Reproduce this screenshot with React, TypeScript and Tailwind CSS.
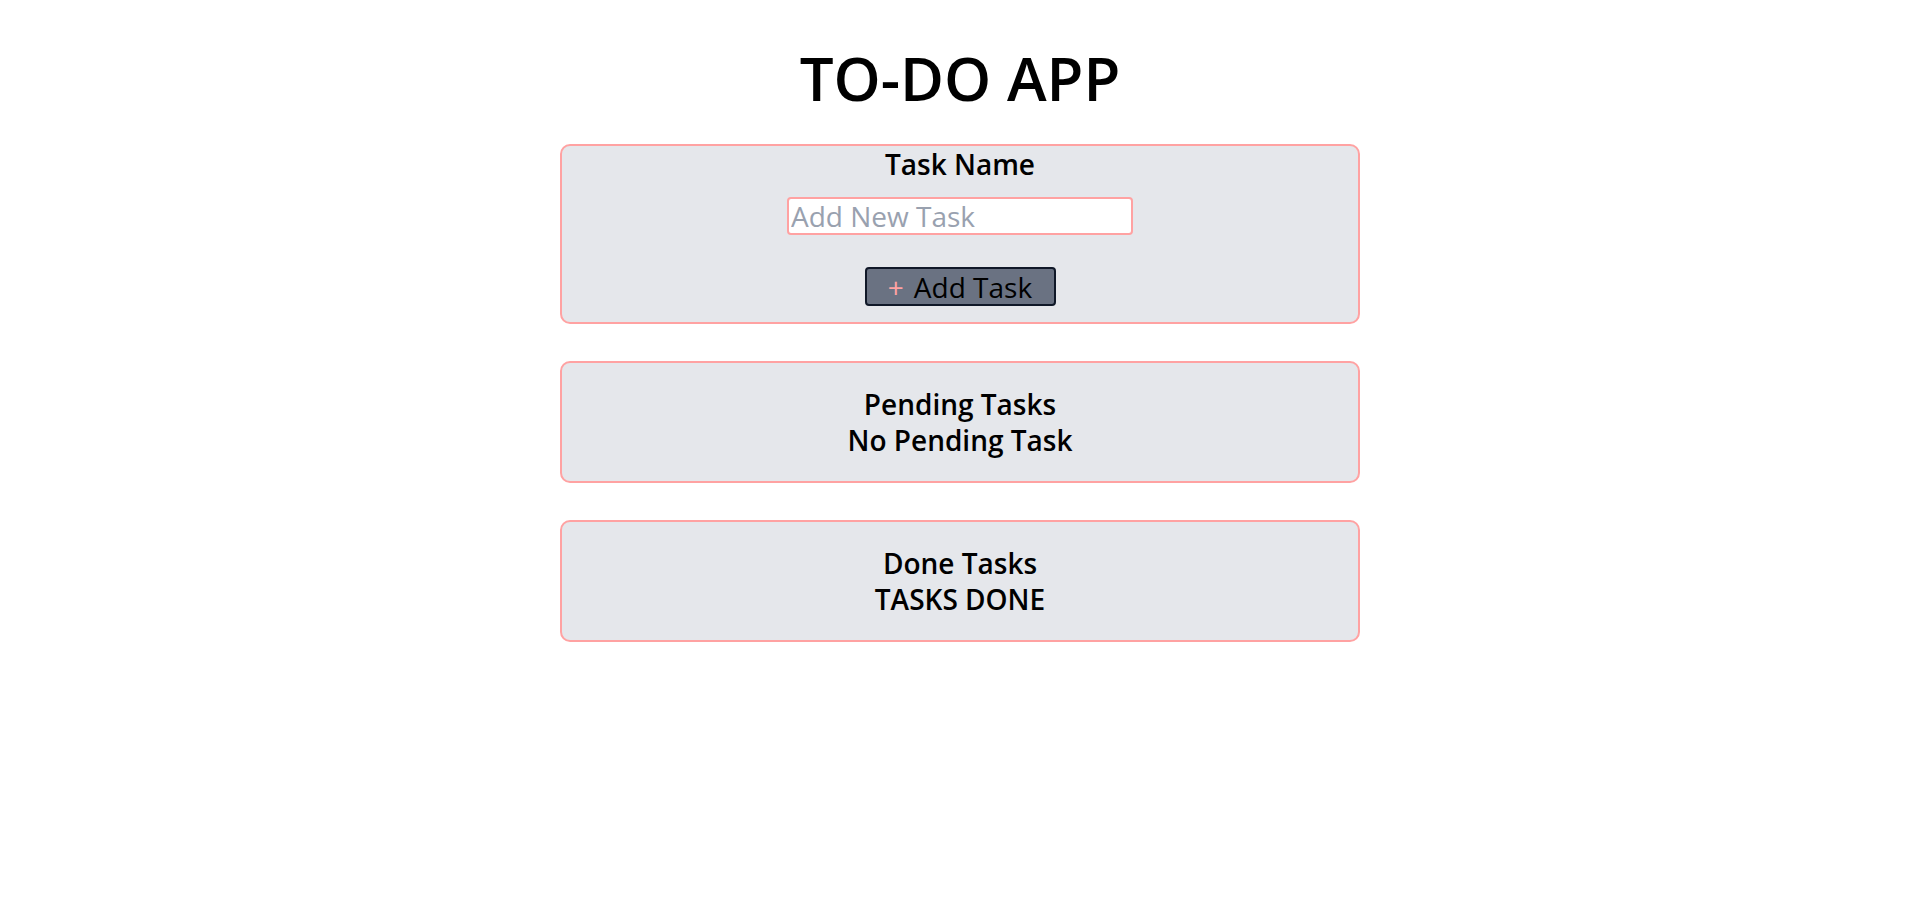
export default function App() {
  return (
    <div className="min-h-screen bg-white font-['Open_Sans',sans-serif] text-black">
      <div className="flex flex-col items-center pt-[48px]">
        <h1 className="text-6xl font-semibold">TO-DO APP</h1>

        {/* Add task card */}
        <div className="mt-9 flex w-[800px] flex-col items-center rounded-[10px] border-2 border-red-300 bg-gray-200 pb-[16px]">
          <label htmlFor="task" className="text-[28px] leading-9 font-semibold">
            Task Name
          </label>
          <input
            id="task"
            type="text"
            placeholder="Add New Task"
            className="mt-[15px] h-[38px] w-[346px] rounded-sm border-2 border-red-300 bg-white px-0.5 text-[28px] leading-9 placeholder:text-gray-400 focus:outline-none"
          />
          <button className="mt-8 flex h-[39px] w-[191px] items-center justify-center gap-2.5 rounded-sm border-2 border-gray-900 bg-gray-500 text-[28px] leading-9">
            <span className="text-red-300">+</span>
            <span>Add Task</span>
          </button>
        </div>

        {/* Pending */}
        <div className="mt-[37px] flex w-[800px] flex-col items-center rounded-[10px] border-2 border-red-300 bg-gray-200 py-[23px] text-[28px] leading-9 font-semibold">
          <h2>Pending Tasks</h2>
          <p>No Pending Task</p>
        </div>

        {/* Done */}
        <div className="mt-[37px] flex w-[800px] flex-col items-center rounded-[10px] border-2 border-red-300 bg-gray-200 py-[23px] text-[28px] leading-9 font-semibold">
          <h2>Done Tasks</h2>
          <p>TASKS DONE</p>
        </div>
      </div>
    </div>
  );
}
